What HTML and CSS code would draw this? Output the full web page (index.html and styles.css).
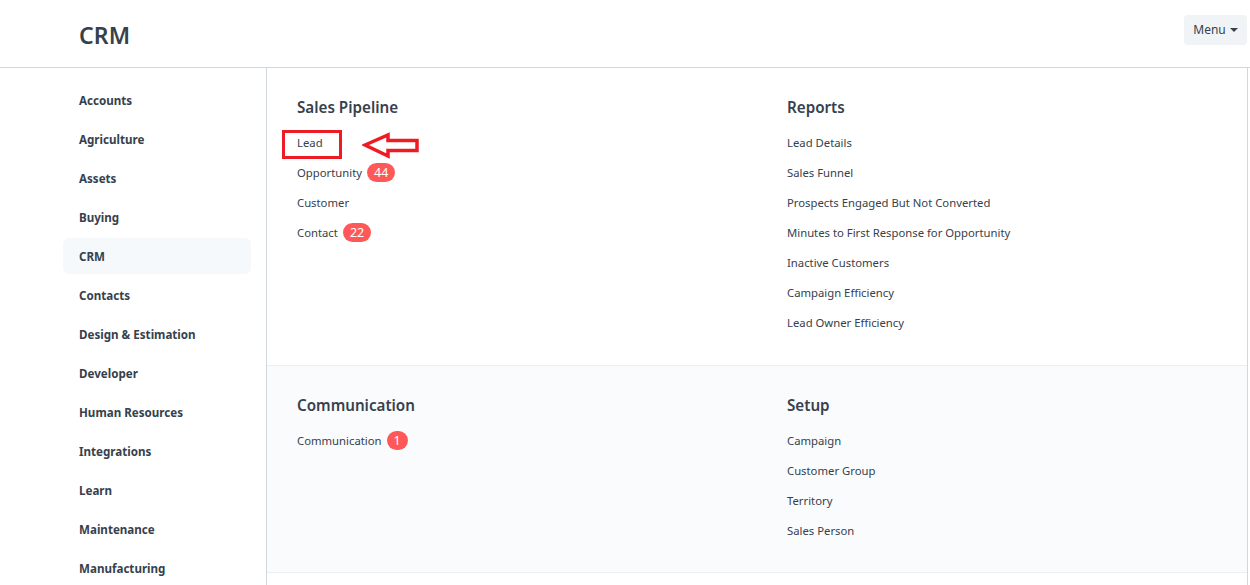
FILE: index.html
```html
<!DOCTYPE html>
<html>
<head>
<meta charset="utf-8">
<link rel="stylesheet" href="styles.css">
</head>
<body>
<header class="topbar">
  <div class="topbar-inner">
    <h1 class="page-title">CRM</h1>
    <button class="menu-btn">Menu <span class="caret"></span></button>
  </div>
</header>
<div class="layout">
  <nav class="sidebar">
    <a class="side-item">Accounts</a>
    <a class="side-item">Agriculture</a>
    <a class="side-item">Assets</a>
    <a class="side-item">Buying</a>
    <a class="side-item active">CRM</a>
    <a class="side-item">Contacts</a>
    <a class="side-item">Design &amp; Estimation</a>
    <a class="side-item">Developer</a>
    <a class="side-item">Human Resources</a>
    <a class="side-item">Integrations</a>
    <a class="side-item">Learn</a>
    <a class="side-item">Maintenance</a>
    <a class="side-item">Manufacturing</a>
  </nav>
  <main class="main">
    <section class="section first">
      <div class="col">
        <h3 class="sec-title">Sales Pipeline</h3>
        <a class="link">Lead</a>
        <a class="link">Opportunity <span class="badge">44</span></a>
        <a class="link">Customer</a>
        <a class="link">Contact <span class="badge">22</span></a>
      </div>
      <div class="col">
        <h3 class="sec-title">Reports</h3>
        <a class="link">Lead Details</a>
        <a class="link">Sales Funnel</a>
        <a class="link">Prospects Engaged But Not Converted</a>
        <a class="link">Minutes to First Response for Opportunity</a>
        <a class="link">Inactive Customers</a>
        <a class="link">Campaign Efficiency</a>
        <a class="link">Lead Owner Efficiency</a>
      </div>
      <div class="mark-box"></div>
      <svg class="mark-arrow" width="60" height="30" viewBox="0 0 60 30">
        <path d="M3 13 L26 3 L26 8.5 L55 8.5 L55 18.5 L26 18.5 L26 24 Z" fill="#fff" stroke="#ed1c24" stroke-width="3.5" stroke-linejoin="miter"/>
      </svg>
    </section>
    <section class="section alt">
      <div class="col">
        <h3 class="sec-title">Communication</h3>
        <a class="link">Communication <span class="badge">1</span></a>
      </div>
      <div class="col">
        <h3 class="sec-title">Setup</h3>
        <a class="link">Campaign</a>
        <a class="link">Customer Group</a>
        <a class="link">Territory</a>
        <a class="link">Sales Person</a>
      </div>
    </section>
  </main>
</div>
</body>
</html>
```

FILE: styles.css
```css
* { box-sizing: border-box; }
html, body { margin: 0; padding: 0; background: #fff; }
body {
  font-family: "Noto Sans", "Open Sans", sans-serif;
  color: #36414c;
  overflow: hidden;
  height: 585px;
}
.topbar {
  height: 68px;
  border-bottom: 1px solid #d1d8dd;
}
.topbar-inner {
  display: flex;
  align-items: center;
  justify-content: space-between;
  height: 67px;
  padding: 0 3px 0 79px;
}
.page-title {
  margin: 0;
  font-size: 23px;
  font-weight: 600;
  color: #36414c;
  letter-spacing: 0.2px;
  position: relative;
  top: 1px;
}
.menu-btn {
  height: 30px;
  width: 63px;
  border: none;
  border-radius: 4px;
  background: #f0f4f7;
  color: #36414c;
  font-family: inherit;
  font-size: 12px;
  padding: 0;
  display: flex;
  align-items: center;
  justify-content: center;
  gap: 4px;
  position: relative;
  top: -4px;
}
.caret {
  width: 0; height: 0;
  border-left: 4px solid transparent;
  border-right: 4px solid transparent;
  border-top: 4px solid #36414c;
}
.layout {
  display: flex;
  padding-left: 63px;
}
.sidebar {
  width: 188px;
  margin-right: 15px;
  padding-top: 14px;
  display: flex;
  flex-direction: column;
  gap: 3px;
}
.side-item {
  display: flex;
  align-items: center;
  height: 36px;
  padding-left: 16px;
  border-radius: 6px;
  font-size: 11.6px;
  font-weight: 700;
  color: #36414c;
}
.side-item.active { background: #f5f9fc; }
.main {
  width: 982px;
  border-left: 1px solid #d1d8dd;
  border-right: 1px solid #d1d8dd;
  min-height: 520px;
}
.section {
  position: relative;
  display: grid;
  grid-template-columns: 490px 1fr;
  padding: 30px 0 27px 30px;
  border-bottom: 1px solid #ebeff2;
}
.section.first { padding-bottom: 28px; }
.section.alt { background: #fafbfc; }
.col { display: flex; flex-direction: column; }
.sec-title {
  margin: 0 0 11px;
  font-size: 15.2px;
  line-height: 18px;
  font-weight: 600;
  color: #36414c;
}
.link {
  display: flex;
  align-items: center;
  height: 30px;
  font-size: 11.3px;
  color: #36414c;
}
.badge {
  display: inline-flex;
  align-items: center;
  justify-content: center;
  margin-left: 5px;
  height: 19px;
  min-width: 19px;
  padding: 0 7px;
  border-radius: 10px;
  background: #ff5858;
  color: #fff;
  font-size: 12.5px;
}
.mark-box {
  position: absolute;
  left: 15px;
  top: 62px;
  width: 60px;
  height: 29px;
  border: 3px solid #ed1c24;
}
.mark-arrow {
  position: absolute;
  left: 95px;
  top: 64px;
}
```
